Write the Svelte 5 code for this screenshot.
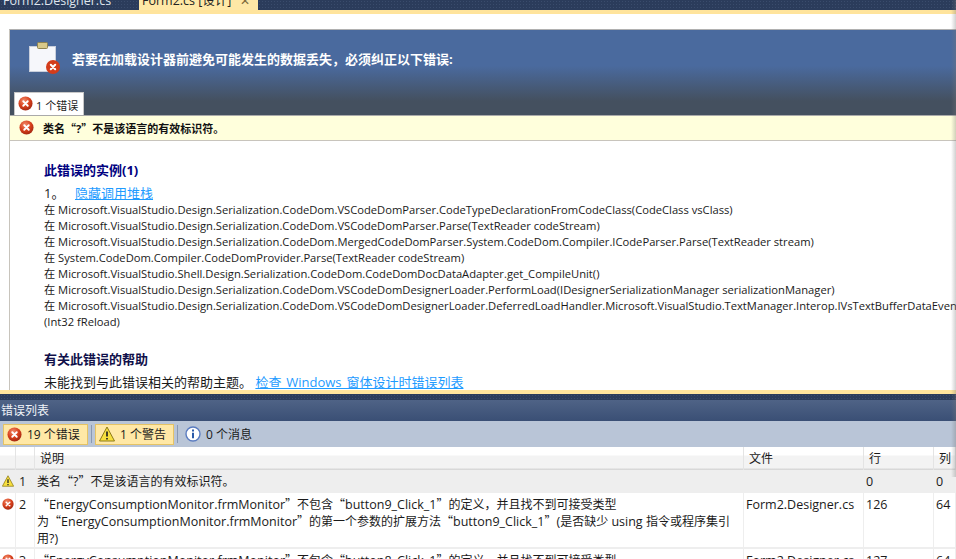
<script lang="ts">
  const stack = [
    'Microsoft.VisualStudio.Design.Serialization.CodeDom.VSCodeDomParser.CodeTypeDeclarationFromCodeClass(CodeClass vsClass)',
    'Microsoft.VisualStudio.Design.Serialization.CodeDom.VSCodeDomParser.Parse(TextReader codeStream)',
    'Microsoft.VisualStudio.Design.Serialization.CodeDom.MergedCodeDomParser.System.CodeDom.Compiler.ICodeParser.Parse(TextReader stream)',
    'System.CodeDom.Compiler.CodeDomProvider.Parse(TextReader codeStream)',
    'Microsoft.VisualStudio.Shell.Design.Serialization.CodeDom.CodeDomDocDataAdapter.get_CompileUnit()',
    'Microsoft.VisualStudio.Design.Serialization.CodeDom.VSCodeDomDesignerLoader.PerformLoad(IDesignerSerializationManager serializationManager)',
    'Microsoft.VisualStudio.Design.Serialization.CodeDom.VSCodeDomDesignerLoader.DeferredLoadHandler.Microsoft.VisualStudio.TextManager.Interop.IVsTextBufferDataEvents.OnLoadCompleted'
  ];

  // CJK runs keep their own size, the latin around them is a bit bigger
  const runs = (s: string) => s.split(/([\u2018-\u201d\u3000-\u9fff\uff00-\uffef]+)/);
</script>

{#snippet mixed(s)}
  {#each runs(s) as part, i}{#if i % 2}<span class="cjk">{part}</span>{:else}{part}{/if}{/each}
{/snippet}

{#snippet errorIcon(size)}
  <svg class="icon" width={size} height={size} viewBox="0 0 16 16">
    <defs>
      <radialGradient id="err" cx="40%" cy="30%" r="75%">
        <stop offset="0" stop-color="#f08a6a" />
        <stop offset="0.55" stop-color="#d8401c" />
        <stop offset="1" stop-color="#9c2410" />
      </radialGradient>
    </defs>
    <circle cx="8" cy="8" r="7.5" fill="url(#err)" />
    <path d="M5.6 5.6l4.8 4.8M10.4 5.6l-4.8 4.8" stroke="#fff" stroke-width="2" stroke-linecap="round" />
  </svg>
{/snippet}

{#snippet warnIcon(size)}
  <svg class="icon" width={size} height={size} viewBox="0 0 16 16">
    <path d="M8 1L15.5 15H.5z" fill="#f7df3e" stroke="#8c7a1a" stroke-width="1" stroke-linejoin="round" />
    <path d="M8 5.5v5M8 12v1.6" stroke="#222" stroke-width="1.7" />
  </svg>
{/snippet}

<div class="page">
  <div class="tabs">
    <span class="doc-tab">Form2.Designer.cs</span>
    <span class="doc-tab active">Form2.cs [设计]<span class="close">✕</span></span>
  </div>
  <div class="tab-line"></div>

  <div class="designer">
    <div class="panel">
      <div class="banner">
        <div class="banner-head">
          <div class="clip">
            <svg width="32" height="32" viewBox="0 0 32 32">
              <rect x="0.5" y="4.5" width="26" height="25" fill="#f6f7fb" stroke="#c9cfdc" />
              <rect x="8.5" y="0.5" width="10" height="6" rx="1" fill="#d8c98a" stroke="#8f8350" />
              <circle cx="24" cy="25" r="7" fill="#d33c1b" />
              <path d="M21.8 22.8l4.4 4.4M26.2 22.8l-4.4 4.4" stroke="#fff" stroke-width="2" stroke-linecap="round" />
            </svg>
          </div>
          <h1>若要在加载设计器前避免可能发生的数据丢失，必须纠正以下错误:</h1>
        </div>
        <div class="err-tab">{@render errorIcon(15)}<span>1 个错误</span></div>
      </div>
      <div class="notice">{@render errorIcon(15)}<b>{@render mixed('类名“?”不是该语言的有效标识符。')}</b></div>
      <div class="body">
        <h2>此错误的实例(1)</h2>
        <div class="item"><span class="num">1。</span><a href="#stack">隐藏调用堆栈</a></div>
        {#each stack as line}
          <div class="frame">在 {line}</div>
        {/each}
        <div class="frame">(Int32 fReload)</div>
        <h2 class="help">有关此错误的帮助</h2>
        <div class="item">未能找到与此错误相关的帮助主题。 <a class="check" href="#check">检查 Windows 窗体设计时错误列表</a></div>
      </div>
    </div>
  </div>

  <div class="tab-line"></div>
  <div class="dots"></div>
  <div class="title">错误列表</div>
  <div class="toolbar">
    <span class="filter on first">{@render errorIcon(15)}19 个错误</span>
    <i class="sep"></i>
    <span class="filter on">{@render warnIcon(16)}1 个警告</span>
    <i class="sep"></i>
    <span class="filter">
      <svg class="icon" width="16" height="16" viewBox="0 0 16 16">
        <circle cx="8" cy="8" r="7" fill="#fff" stroke="#5a7cc0" stroke-width="1.4" />
        <path d="M8 3.6v1.8M8 6.8v5.4" stroke="#2a5aa8" stroke-width="2" />
      </svg>0 个消息
    </span>
  </div>

  <div class="grid head">
    <div></div><div></div><div class="pad">说明</div><div class="pad">文件</div><div class="pad">行</div><div class="pad">列</div>
  </div>
  <div class="grid row warn">
    <div class="ic">{@render warnIcon(12)}</div><div class="no">1</div><div>{@render mixed('类名“?”不是该语言的有效标识符。')}</div><div></div><div>0</div><div>0</div>
  </div>
  <div class="grid row">
    <div class="ic">{@render errorIcon(12)}</div><div class="no">2</div>
    <div class="msg">{@render mixed('“EnergyConsumptionMonitor.frmMonitor”不包含“button9_Click_1”的定义，并且找不到可接受类型\n为“EnergyConsumptionMonitor.frmMonitor”的第一个参数的扩展方法“button9_Click_1”(是否缺少 using 指令或程序集引用?)')}</div>
    <div>Form2.Designer.cs</div><div>126</div><div>64</div>
  </div>
  <div class="grid row">
    <div class="ic">{@render errorIcon(12)}</div><div class="no">3</div>
    <div class="msg">{@render mixed('“EnergyConsumptionMonitor.frmMonitor”不包含“button8_Click_1”的定义，并且找不到可接受类型')}</div>
    <div>Form2.Designer.cs</div><div>127</div><div>64</div>
  </div>

  <div class="edge"></div>
</div>

<style>
  :global(body) {
    margin: 0;
    overflow: hidden;
    background: #fff;
  }
  .page {
    position: relative;
    width: 956px;
    height: 559px;
    overflow: hidden;
    font-family: "Open Sans", "Noto Sans CJK SC", sans-serif;
    font-size: 12px;
    color: #1a1a1a;
  }
  /* window shadow along the right side */
  .edge {
    position: absolute;
    right: 0;
    top: 0;
    width: 5px;
    height: 477px;
    background: linear-gradient(90deg, transparent, rgba(120, 120, 120, 0.35));
  }
  .icon {
    flex: none;
    display: block;
  }
  .tabs, .dots {
    background-color: #2b3c5b;
    background-image: radial-gradient(#3a4c6c 35%, transparent 40%);
    background-size: 3px 3px;
  }
  .tabs {
    height: 10px;
    display: flex;
    overflow: hidden;
  }
  .doc-tab {
    font-size: 12.5px;
    line-height: 18px;
    color: #dfe4ec;
    padding: 0 5px 0 3px;
    width: 139px;
    box-sizing: border-box;
    flex: none;
    white-space: nowrap;
    margin-top: -8px;
    height: 18px;
  }
  .doc-tab.active {
    background: #ffe8a6;
    color: #222;
    width: 119px;
    display: flex;
    gap: 9px;
  }
  .close {
    color: #7b6a3a;
    font-size: 12px;
  }
  .tab-line {
    height: 4px;
    background: #ffe49c;
  }
  .designer {
    height: 376px;
    padding: 15px 0 0 9px;
    box-sizing: border-box;
    overflow: hidden;
  }
  .panel {
    border-top: 1px solid #b0b0b0;
    border-left: 1px solid #c8c4bc;
    height: 100%;
  }
  .banner {
    height: 86px;
    box-sizing: border-box;
    background: linear-gradient(#4a6a9e 0, #4a6a9e 36px, #44505f 71px, #44505f 100%);
    border-bottom: 1px solid #aaa;
    display: flex;
    flex-direction: column;
    justify-content: space-between;
  }
  .banner-head {
    display: flex;
    align-items: center;
    gap: 11px;
    padding: 12px 0 0 19px;
  }
  .clip {
    height: 32px;
  }
  h1 {
    margin: 0;
    font-size: 13px;
    font-weight: 700;
    color: #fff;
  }
  .err-tab {
    align-self: flex-start;
    margin-left: 4px;
    height: 23px;
    width: 70px;
    box-sizing: border-box;
    background: #fff;
    border: 1px solid #c8c8c8;
    border-bottom: 0;
    display: flex;
    align-items: center;
    gap: 3px;
    padding: 0 0 2px 3px;
    font-size: 11px;
  }
  .err-tab span {
    padding-top: 3px;
  }
  .notice {
    height: 25px;
    box-sizing: border-box;
    background: #ffffdc;
    border-bottom: 1px solid #c8c4bc;
    display: flex;
    align-items: center;
    gap: 9px;
    padding-left: 9px;
    font-size: 11px;
    color: #111;
  }
  .notice b {
    padding-top: 1px;
  }
  .notice .icon {
    margin-bottom: 2px;
  }
  .notice .cjk {
    font-size: 11px;
    font-weight: 700;
  }
  .body {
    padding: 20px 0 0 34px;
    white-space: nowrap;
  }
  h2 {
    margin: 0;
    font-size: 13px;
    line-height: 18px;
    font-weight: 700;
    color: #000080;
  }
  h2.help {
    margin-top: 20px;
    color: #10104a;
  }
  .item {
    font-size: 13px;
    line-height: 18px;
    margin-top: 5px;
  }
  .num {
    display: inline-block;
    width: 31px;
  }
  a {
    color: #1e9bff;
    text-decoration: underline;
  }
  .check {
    word-spacing: 1.5px;
  }
  .frame {
    font-size: 11.2px;
    line-height: 16px;
  }
  .dots {
    height: 6px;
  }
  .title {
    height: 21px;
    line-height: 21px;
    background: linear-gradient(#4f6386, #3a4f75);
    color: #f0f3f8;
    padding-left: 1px;
    font-size: 12px;
  }
  .toolbar {
    height: 26px;
    background: #b9c5d7;
    display: flex;
    align-items: center;
    padding-left: 3px;
    gap: 3px;
  }
  .filter {
    height: 21px;
    box-sizing: border-box;
    display: flex;
    align-items: center;
    gap: 5px;
    padding: 0 7px 0 3px;
    font-size: 12px;
    border: 1px solid transparent;
  }
  .filter.first {
    width: 85px;
  }
  .filter.on {
    background: #ffe8a6;
    border-color: #e5c365;
  }
  .sep {
    width: 1px;
    height: 18px;
    background: #8a99b2;
  }
  .grid {
    display: grid;
    grid-template-columns: 16px 19px 709px 120px 70px 22px;
  }
  .head {
    height: 23px;
    line-height: 23px;
    background: linear-gradient(#fff 0, #fff 8px, #f3f3f3 9px, #f3f3f3 21px, #d8d8d8 22px);
  }
  .head > div {
    border-right: 1px solid #e4e4e4;
  }
  .pad {
    padding-left: 5px;
  }
  .row {
    font-size: 12.5px;
    line-height: 17px;
    border-bottom: 2px solid #eee;
    background: #fff;
  }
  .row > div {
    padding: 3px 1px 0 2px;
    border-right: 1px solid #eee;
    box-sizing: border-box;
  }
  .cjk {
    font-family: "Noto Sans CJK SC", sans-serif;
    font-size: 12px;
    line-height: 1;
  }
  .warn {
    background: #eee;
    height: 23px;
    box-sizing: border-box;
  }
  .ic {
    display: flex;
    justify-content: center;
    padding: 5px 0 0 !important;
  }
  .no {
    padding-left: 3px !important;
  }
  .msg {
    white-space: pre-line;
    padding-right: 0 !important;
  }
</style>
